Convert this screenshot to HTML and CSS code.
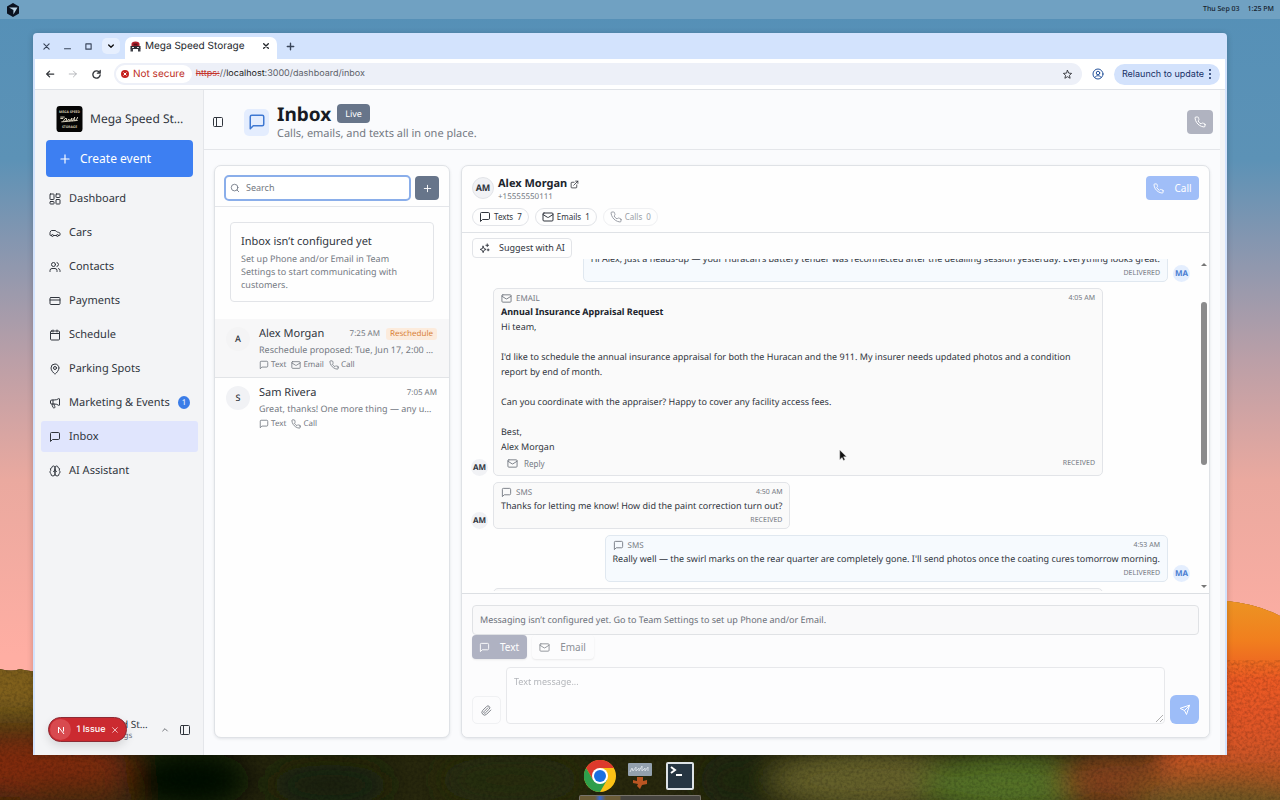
FILE: index.html
```html
<!DOCTYPE html>
<html lang="en">
<head>
<meta charset="utf-8">
<meta name="viewport" content="width=device-width, initial-scale=1">
<title>Mega Speed Storage</title>
<link rel="stylesheet" href="styles.css">
</head>
<body>
<svg class="defs" aria-hidden="true">
  <symbol id="i-message" viewBox="0 0 24 24"><path d="M21 15a2 2 0 0 1-2 2H7l-4 4V5a2 2 0 0 1 2-2h14a2 2 0 0 1 2 2z"/></symbol>
  <symbol id="i-mail" viewBox="0 0 24 24"><rect x="2" y="4" width="20" height="16" rx="2"/><path d="m22 7-9 5.7a2 2 0 0 1-2 0L2 7"/></symbol>
  <symbol id="i-phone" viewBox="0 0 24 24"><path d="M22 16.92v3a2 2 0 0 1-2.18 2 19.79 19.79 0 0 1-8.63-3.07 19.5 19.5 0 0 1-6-6 19.79 19.79 0 0 1-3.07-8.67A2 2 0 0 1 4.11 2h3a2 2 0 0 1 2 1.72 12.84 12.84 0 0 0 .7 2.81 2 2 0 0 1-.45 2.11L8.09 9.91a16 16 0 0 0 6 6l1.27-1.27a2 2 0 0 1 2.11-.45 12.84 12.84 0 0 0 2.81.7A2 2 0 0 1 22 16.92z"/></symbol>
  <symbol id="i-dash" viewBox="0 0 24 24"><rect x="2" y="2" width="8" height="11" rx="1"/><rect x="14" y="2" width="8" height="7" rx="1"/><rect x="14" y="13" width="8" height="9" rx="1"/><rect x="2" y="17" width="8" height="5" rx="1"/></symbol>
  <symbol id="i-car" viewBox="0 0 24 24"><path d="M19 17h2c.6 0 1-.4 1-1v-3c0-.9-.7-1.7-1.5-1.9C18.7 10.6 16 10 16 10s-1.3-1.4-2.2-2.3c-.5-.4-1.1-.7-1.8-.7H5c-.6 0-1.1.4-1.4.9l-1.4 2.9A3.7 3.7 0 0 0 2 12v4c0 .6.4 1 1 1h2"/><circle cx="7" cy="17" r="2"/><path d="M9 17h6"/><circle cx="17" cy="17" r="2"/></symbol>
  <symbol id="i-users" viewBox="0 0 24 24"><path d="M16 21v-2a4 4 0 0 0-4-4H6a4 4 0 0 0-4 4v2"/><circle cx="9" cy="7" r="4"/><path d="M22 21v-2a4 4 0 0 0-3-3.87M16 3.13a4 4 0 0 1 0 7.75"/></symbol>
  <symbol id="i-card" viewBox="0 0 24 24"><rect x="2" y="5" width="20" height="14" rx="2"/><path d="M2 10h20"/></symbol>
  <symbol id="i-calendar" viewBox="0 0 24 24"><path d="M8 2v4M16 2v4M3 9h18"/><rect x="3" y="4" width="18" height="18" rx="2"/></symbol>
  <symbol id="i-pin" viewBox="0 0 24 24"><path d="M20 10c0 5-5.5 10.2-7.4 11.8a1 1 0 0 1-1.2 0C9.500 20.200 4 15 4 10a8 8 0 0 1 16 0"/><circle cx="12" cy="10" r="3"/></symbol>
  <symbol id="i-mega" viewBox="0 0 24 24"><path d="M11 6a13 13 0 0 0 8.400-2.800A1 1 0 0 1 21 4v12a1 1 0 0 1-1.600.8A13 13 0 0 0 11 14H5a2 2 0 0 1-2-2V8a2 2 0 0 1 2-2z"/><path d="M6 14a12 12 0 0 0 2.400 7.200 2 2 0 0 0 3.200-2.400A8 8 0 0 1 10 14M8 6v8"/></symbol>
  <symbol id="i-brain" viewBox="0 0 24 24"><path d="M12 5a3 3 0 1 0-5.997.125 4 4 0 0 0-2.526 5.770 4 4 0 0 0 .556 6.588A4 4 0 1 0 12 18Z"/><path d="M12 5a3 3 0 1 1 5.997.125 4 4 0 0 1 2.526 5.770 4 4 0 0 1-.556 6.588A4 4 0 1 1 12 18Z"/><path d="M15 13a4.500 4.500 0 0 1-3-4 4.500 4.500 0 0 1-3 4"/></symbol>
  <symbol id="i-panel" viewBox="0 0 24 24"><rect x="3" y="3" width="18" height="18" rx="2"/><path d="M9 3v18"/></symbol>
  <symbol id="i-plus" viewBox="0 0 24 24"><path d="M5 12h14M12 5v14"/></symbol>
  <symbol id="i-search" viewBox="0 0 24 24"><circle cx="11" cy="11" r="8"/><path d="m21 21-4.300-4.300"/></symbol>
  <symbol id="i-sparkles" viewBox="0 0 24 24"><path d="m9 7 1.900 5.100L15.500 14l-4.600 1.900L9 21l-1.900-5.100L2.500 14l4.600-1.900zM18 2v6M15 5h6M20 13v4M18 15h4"/></symbol>
  <symbol id="i-external" viewBox="0 0 24 24"><path d="M15 3h6v6M10 14 21 3M18 13v6a2 2 0 0 1-2 2H5a2 2 0 0 1-2-2V8a2 2 0 0 1 2-2h6"/></symbol>
  <symbol id="i-clip" viewBox="0 0 24 24"><path d="m21.440 11.050-9.190 9.190a6 6 0 0 1-8.490-8.490l8.570-8.570A4 4 0 1 1 18 8.840l-8.590 8.570a2 2 0 0 1-2.830-2.830l8.490-8.480"/></symbol>
  <symbol id="i-send" viewBox="0 0 24 24"><path d="m21 3-6 18-4-8-8-4Z"/><path d="M21 3 11 13"/></symbol>
  <symbol id="i-up" viewBox="0 0 24 24"><path d="m5 15 7-7 7 7"/></symbol>
  <symbol id="i-down" viewBox="0 0 24 24"><path d="m5 9 7 7 7-7"/></symbol>
  <symbol id="i-x" viewBox="0 0 24 24"><path d="M5 5l14 14M19 5 5 19"/></symbol>
  <symbol id="i-min" viewBox="0 0 24 24"><path d="M4 18h16"/></symbol>
  <symbol id="i-max" viewBox="0 0 24 24"><path d="M5 5h14v14H5z"/></symbol>
  <symbol id="i-left" viewBox="0 0 24 24"><path d="M21 12H4M11 5l-7 7 7 7"/></symbol>
  <symbol id="i-right" viewBox="0 0 24 24"><path d="M3 12h17M13 5l7 7-7 7"/></symbol>
  <symbol id="i-reload" viewBox="0 0 24 24"><path d="M20 13a8 8 0 1 1-2.300-6.700L20 8.500M20 3v6h-6"/></symbol>
  <symbol id="i-star" viewBox="0 0 24 24"><path d="m12 3 2.700 6 6.300.6-4.800 4.200 1.500 6.400-5.700-3.400-5.700 3.400 1.500-6.400L3 9.600 9.300 9z"/></symbol>
  <symbol id="i-user" viewBox="0 0 24 24"><circle cx="12" cy="12" r="10"/><circle cx="12" cy="10" r="3.500"/><path d="M5.500 19c2-3 4-3.500 6.500-3.500s4.500.5 6.500 3.500"/></symbol>
</svg>

<svg class="wallpaper" viewBox="0 0 1280 800" preserveAspectRatio="none" aria-hidden="true">
  <defs>
    <linearGradient id="sky" x1="0" y1="0" x2="0" y2="1">
      <stop offset="0" stop-color="#5590b7"/><stop offset=".2" stop-color="#5c92b6"/><stop offset=".3" stop-color="#8496b0"/>
      <stop offset=".45" stop-color="#bb9fa7"/><stop offset=".6" stop-color="#eaa99f"/><stop offset=".82" stop-color="#ffaea3"/>
    </linearGradient>
    <linearGradient id="dune" x1="0" y1="600" x2="0" y2="800" gradientUnits="userSpaceOnUse">
      <stop offset="0" stop-color="#ec9423"/><stop offset=".2" stop-color="#f17f1e"/><stop offset=".4" stop-color="#ec5a24"/>
      <stop offset=".7" stop-color="#dc5427"/><stop offset="1" stop-color="#9c5420"/>
    </linearGradient>
    <filter id="soft" x="-50%" y="-50%" width="200%" height="200%"><feGaussianBlur stdDeviation="14"/></filter>
    <filter id="grain" x="0" y="0" width="100%" height="100%"><feTurbulence type="fractalNoise" baseFrequency=".35" numOctaves="2"/><feColorMatrix values="0 0 0 0 0  0 0 0 0 0  0 0 0 0 0  0 1.600 0 0 -.6"/></filter>
    <clipPath id="ground"><path d="M0 669q12 3 20 0 8 2 20 3V755H1227V601q30 3 53 15V800H0z"/></clipPath>
  </defs>
  <rect width="1280" height="800" fill="url(#sky)"/>
  <g clip-path="url(#ground)">
    <rect y="590" width="1280" height="210" fill="#28280d"/>
    <g filter="url(#soft)">
      <rect x="-40" y="650" width="100" height="70" fill="#80601e"/>
      <ellipse cx="20" cy="765" rx="110" ry="32" fill="#812b10"/>
      <ellipse cx="80" cy="800" rx="60" ry="18" fill="#4b2a0d"/>
      <ellipse cx="190" cy="780" rx="60" ry="30" fill="#050805"/>
      <ellipse cx="330" cy="785" rx="60" ry="20" fill="#152010"/>
      <ellipse cx="510" cy="780" rx="70" ry="24" fill="#252d10"/>
      <ellipse cx="740" cy="780" rx="40" ry="28" fill="#1a2611"/>
      <ellipse cx="870" cy="780" rx="100" ry="30" fill="#66622a"/>
      <ellipse cx="1010" cy="785" rx="90" ry="30" fill="#557228"/>
      <ellipse cx="1120" cy="780" rx="60" ry="28" fill="#85431a"/>
      <rect x="1160" y="560" width="180" height="230" fill="url(#dune)"/>
      <ellipse cx="1220" cy="805" rx="90" ry="26" fill="#6b5720"/>
    </g>
    <rect x="1226" y="590" width="60" height="110" fill="url(#dune)"/>
    <rect y="660" width="1280" height="140" filter="url(#grain)" opacity=".25"/>
  </g>
</svg>

<header class="menubar">
  <svg class="cube" viewBox="0 0 14 14"><path d="M7 0l6 3.500v7L7 14 1 10.500v-7z" fill="#0b1220"/><path d="M3 4.500h8.500L7.400 11.500V7z" fill="#b9d3e4"/></svg>
  <div class="clock"><span>Thu Sep 03</span><span>1:25 PM</span></div>
</header>

<div class="window">
  <div class="tabstrip">
    <button class="wbtn" aria-label="Close window"><svg class="ic s9 bold"><use href="#i-x"/></svg></button>
    <button class="wbtn" aria-label="Minimize"><svg class="ic s9 bold"><use href="#i-min"/></svg></button>
    <button class="wbtn" aria-label="Maximize"><svg class="ic s9 bold"><use href="#i-max"/></svg></button>
    <button class="wbtn chip" aria-label="Search tabs"><svg class="ic s8 heavy"><use href="#i-down"/></svg></button>
    <div class="tab">
      <svg class="s11" viewBox="0 0 22 22"><path d="M3 10V6q0-5 8-5t8 5v4z" fill="#b3202c"/><path d="M1 10h20v6H1z" fill="#2b2d33"/><path d="M1 15h5v6H1zM16 15h5v6h-5z" fill="#3d3f46"/><path d="M7 5h8v4H7z" fill="#5a1118"/><path d="M4 12h4v2H4zM14 12h4v2h-4z" fill="#e4e4e4"/></svg>
      <span class="tab-title">Mega Speed Storage</span>
      <button class="wbtn" aria-label="Close tab"><svg class="ic s8 heavy"><use href="#i-x"/></svg></button>
    </div>
    <button class="wbtn newtab" aria-label="New tab"><svg class="ic s11 bold"><use href="#i-plus"/></svg></button>
  </div>
  <div class="toolbar">
    <button class="wbtn" aria-label="Back"><svg class="ic s10 bold"><use href="#i-left"/></svg></button>
    <button class="wbtn dim" aria-label="Forward"><svg class="ic s10"><use href="#i-right"/></svg></button>
    <button class="wbtn" aria-label="Reload"><svg class="ic s11 bold"><use href="#i-reload"/></svg></button>
    <div class="urlbar">
      <span class="insecure"><svg class="s8" viewBox="0 0 16 16"><circle cx="8" cy="8" r="8" fill="#c5221f"/><path d="M5 5l6 6M11 5l-6 6" stroke="#fff" stroke-width="2"/></svg>Not secure</span>
      <span class="url"><s>https:</s>//<b>localhost</b>:3000/dashboard/inbox</span>
      <svg class="ic s11 star"><use href="#i-star"/></svg>
    </div>
    <button class="wbtn profile" aria-label="Profile"><svg class="ic s12"><use href="#i-user"/></svg></button>
    <button class="relaunch">Relaunch to update <svg class="s12" viewBox="0 0 24 24" fill="#173066"><circle cx="12" cy="4" r="2"/><circle cx="12" cy="12" r="2"/><circle cx="12" cy="20" r="2"/></svg></button>
  </div>

  <div class="app">
    <aside class="sidebar">
      <div class="brand">
        <svg class="logo" viewBox="0 0 54 54" aria-hidden="true"><rect width="54" height="54" rx="7" fill="#050505"/><text x="27" y="15" text-anchor="middle" class="logo-text">MEGA SPEED</text><path d="M8 23h9M8 26h6M14 32q4-9 7-6 1 4-3 6 6-1 8-5-1 5 2 4l4-6q-2 7 1 6l5-8q-3 9 1 7 4-2 5-7M10 33l34-3" fill="none" stroke="#e0d9c4" stroke-width="2"/><text x="27" y="45" text-anchor="middle" class="logo-text">STORAGE</text></svg>
        <span class="ellipsis">Mega Speed Storage</span>
      </div>
      <button class="create"><svg class="ic s14"><use href="#i-plus"/></svg>Create event</button>
      <nav class="nav">
        <a href="#"><svg class="ic s12"><use href="#i-dash"/></svg>Dashboard</a>
        <a href="#"><svg class="ic s12"><use href="#i-car"/></svg>Cars</a>
        <a href="#"><svg class="ic s12"><use href="#i-users"/></svg>Contacts</a>
        <a href="#"><svg class="ic s12"><use href="#i-card"/></svg>Payments</a>
        <a href="#"><svg class="ic s12"><use href="#i-calendar"/></svg>Schedule</a>
        <a href="#"><svg class="ic s12"><use href="#i-pin"/></svg>Parking Spots</a>
        <a href="#"><svg class="ic s12"><use href="#i-mega"/></svg>Marketing &amp; Events<span class="count">1</span></a>
        <a href="#" class="active" aria-current="page"><svg class="ic s12"><use href="#i-message"/></svg>Inbox</a>
        <a href="#"><svg class="ic s12"><use href="#i-brain"/></svg>AI Assistant</a>
      </nav>
      <div class="account">
        <div class="account-text"><span class="ellipsis">Mega Speed Storage</span><small>Account settings</small></div>
        <svg class="ic s8"><use href="#i-up"/></svg>
        <button class="plain" aria-label="Collapse sidebar"><svg class="ic s12"><use href="#i-panel"/></svg></button>
        <div class="issue"><span class="issue-n"><svg class="s10" viewBox="0 0 20 20" fill="none" stroke="#fff" stroke-width="2"><path d="M5 16V4l11 14M15 4v9"/></svg></span>1 Issue<svg class="ic s8"><use href="#i-x"/></svg></div>
      </div>
    </aside>

    <main class="main">
      <header class="page-head">
        <button class="plain" aria-label="Toggle sidebar"><svg class="ic s12"><use href="#i-panel"/></svg></button>
        <span class="head-icon"><svg class="ic s18"><use href="#i-message"/></svg></span>
        <div class="head-text">
          <div class="head-row"><h1>Inbox</h1><span class="live">Live</span></div>
          <p>Calls, emails, and texts all in one place.</p>
        </div>
        <button class="phone-btn" disabled aria-label="Phone"><svg class="ic s12"><use href="#i-phone"/></svg></button>
      </header>

      <div class="columns">
        <section class="card threads">
          <div class="search-row">
            <label class="search"><svg class="ic s10"><use href="#i-search"/></svg><input type="text" placeholder="Search" aria-label="Search"></label>
            <button class="add" aria-label="New conversation"><svg class="ic s11"><use href="#i-plus"/></svg></button>
          </div>
          <div class="notice">
            <h2>Inbox isn’t configured yet</h2>
            <p>Set up Phone and/or Email in Team Settings to start communicating with customers.</p>
          </div>
          <article class="thread selected">
            <span class="avatar big">A</span>
            <div class="thread-body">
              <div class="thread-top"><h3>Alex Morgan</h3><time>7:25 AM</time><span class="tag">Reschedule</span></div>
              <p class="ellipsis">Reschedule proposed: Tue, Jun 17, 2:00 PM</p>
              <div class="kinds"><span><svg class="ic s10"><use href="#i-message"/></svg>Text</span><span><svg class="ic s10"><use href="#i-mail"/></svg>Email</span><span><svg class="ic s10"><use href="#i-phone"/></svg>Call</span></div>
            </div>
          </article>
          <article class="thread">
            <span class="avatar big">S</span>
            <div class="thread-body">
              <div class="thread-top"><h3>Sam Rivera</h3><time>7:05 AM</time></div>
              <p class="ellipsis">Great, thanks! One more thing — any update?</p>
              <div class="kinds"><span><svg class="ic s10"><use href="#i-message"/></svg>Text</span><span><svg class="ic s10"><use href="#i-phone"/></svg>Call</span></div>
            </div>
          </article>
        </section>

        <section class="card chat">
          <div class="chat-head">
            <div class="person">
              <span class="avatar mid">AM</span>
              <div class="person-text"><h2>Alex Morgan <a href="#" aria-label="Open contact"><svg class="ic s9"><use href="#i-external"/></svg></a></h2><p>+15555550111</p></div>
              <button class="call" disabled><svg class="ic s11"><use href="#i-phone"/></svg>Call</button>
            </div>
            <div class="pills">
              <button class="pill"><svg class="ic s12"><use href="#i-message"/></svg>Texts<span>7</span></button>
              <button class="pill"><svg class="ic s12"><use href="#i-mail"/></svg>Emails<span>1</span></button>
              <button class="pill" disabled><svg class="ic s12"><use href="#i-phone"/></svg>Calls<span>0</span></button>
            </div>
          </div>
          <div class="assist"><button class="suggest"><svg class="ic s11"><use href="#i-sparkles"/></svg>Suggest with AI</button></div>
          <div class="scroller">
            <div class="messages">
              <div class="msg sent first">
                <div class="bubble">
                  <div class="meta"><svg class="ic s11"><use href="#i-message"/></svg>SMS</div>
                  <p>Hi Alex, just a heads-up — your Huracan's battery tender was reconnected after the detailing session yesterday. Everything looks great.</p>
                  <div class="state">DELIVERED</div>
                </div>
                <span class="avatar small blue">MA</span>
              </div>
              <div class="msg">
                <span class="avatar small">AM</span>
                <div class="bubble">
                  <div class="meta"><svg class="ic s11"><use href="#i-mail"/></svg>EMAIL<time>4:05 AM</time></div>
                  <h3>Annual Insurance Appraisal Request</h3>
                  <p class="letter">Hi team,

I'd like to schedule the annual insurance appraisal for both the Huracan and the 911. My insurer needs updated photos and a condition report by end of month.

Can you coordinate with the appraiser? Happy to cover any facility access fees.

Best,
Alex Morgan</p>
                  <div class="state tall"><button class="reply"><svg class="ic s11"><use href="#i-mail"/></svg>Reply</button>RECEIVED</div>
                </div>
              </div>
              <div class="msg">
                <span class="avatar small">AM</span>
                <div class="bubble">
                  <div class="meta"><svg class="ic s11"><use href="#i-message"/></svg>SMS<time>4:50 AM</time></div>
                  <p>Thanks for letting me know! How did the paint correction turn out?</p>
                  <div class="state">RECEIVED</div>
                </div>
              </div>
              <div class="msg sent">
                <div class="bubble">
                  <div class="meta"><svg class="ic s11"><use href="#i-message"/></svg>SMS<time>4:53 AM</time></div>
                  <p>Really well — the swirl marks on the rear quarter are completely gone. I'll send photos once the coating cures tomorrow morning.</p>
                  <div class="state">DELIVERED</div>
                </div>
                <span class="avatar small blue">MA</span>
              </div>
              <div class="msg next"><div class="bubble"></div></div>
            </div>
            <div class="bar" aria-hidden="true"><i class="arrow-up"></i><i class="thumb"></i><i class="arrow-down"></i></div>
          </div>
          <div class="composer">
            <p class="warn">Messaging isn’t configured yet. Go to Team Settings to set up Phone and/or Email.</p>
            <div class="modes">
              <button class="mode on" disabled><svg class="ic s11"><use href="#i-message"/></svg>Text</button>
              <button class="mode" disabled><svg class="ic s11"><use href="#i-mail"/></svg>Email</button>
            </div>
            <div class="write">
              <button class="attach" disabled aria-label="Attach file"><svg class="ic s11"><use href="#i-clip"/></svg></button>
              <textarea placeholder="Text message..." aria-label="Text message" disabled></textarea>
              <button class="send" disabled aria-label="Send"><svg class="ic s12"><use href="#i-send"/></svg></button>
            </div>
          </div>
        </section>
      </div>
    </main>
  </div>
</div>

<footer class="dock">
  <svg class="s32" viewBox="0 0 32 32"><circle cx="16" cy="16" r="16" fill="#fbc116"/><path d="M2.100 8A16 16 0 0 1 29.900 8H16L9.100 20z" fill="#dd3a2c"/><path d="M2.100 8A16 16 0 0 0 16 32l7-12H9.100z" fill="#2f9e4b"/><circle cx="16" cy="16" r="8" fill="#fff"/><circle cx="16" cy="16" r="6" fill="#1b6fe0"/></svg>
  <svg class="s32" viewBox="0 0 32 32"><rect x="4" y="3" width="24" height="13" rx="1" fill="#93a0ad"/><path d="M6 12l2-4 1 3 3-4v4l3-3v3l3-5v5l3-3v3l3-4v4" fill="none" stroke="#d4dbe2"/><path d="M13 17h6v4l4-1v4l-5 1-2 4-3-3 1-2-5-1v-3l4 1z" fill="#ba5522"/></svg>
  <svg class="s32" viewBox="0 0 32 32"><rect x="2" y="2" width="28" height="28" rx="2" fill="#dde2e6"/><rect x="4" y="4" width="24" height="24" fill="#263542"/><path d="M7 7l4 3-4 3M12 15h6" fill="none" stroke="#fff" stroke-width="2"/></svg>
  <div class="tray"></div>
</footer>

<svg class="pointer" viewBox="0 0 12 18" aria-hidden="true"><path d="M1 1v13l3-3 2 4 2-1-2-4h4z" fill="#111" stroke="#ddd" stroke-width=".6"/></svg>
</body>
</html>
```
FILE: styles.css
```css
* { box-sizing: border-box; }
html, body { height: 100%; }
body { margin: 0; overflow: hidden; position: relative; font: 9px/14px "Noto Sans", sans-serif; text-rendering: geometricPrecision; color: #30353d; background: #5590b7; }
h1, h2, h3, p { margin: 0; font-weight: 400; }
button { margin: 0; padding: 0; border: 0; background: none; font: inherit; color: inherit; display: inline-flex; align-items: center; justify-content: center; }
a { color: inherit; text-decoration: none; }
svg { flex: none; display: block; }
.defs { position: absolute; width: 0; height: 0; }
.ic { fill: none; stroke: currentColor; stroke-width: 2; stroke-linecap: round; stroke-linejoin: round; }
.bold { stroke-width: 3; }
.heavy { stroke-width: 4; }
.s8 { width: 8px; height: 8px; }
.s9 { width: 9px; height: 9px; }
.s10 { width: 10px; height: 10px; }
.s11 { width: 11px; height: 11px; }
.s12 { width: 12px; height: 12px; }
.s14 { width: 14px; height: 14px; }
.s18 { width: 18px; height: 18px; }
.s32 { width: 32px; height: 32px; }
.ellipsis { overflow: hidden; text-overflow: ellipsis; white-space: nowrap; min-width: 0; }

/* Desktop */
.wallpaper { position: absolute; inset: 0; width: 100%; height: 100%; }
.menubar { position: absolute; inset: 0 0 auto; height: 19px; padding: 0 6px; display: flex; align-items: center; justify-content: space-between; background: #70a1c2; color: #14202b; }
.cube { width: 14px; height: 14px; }
.clock { display: flex; gap: 8px; font-size: 7px; font-weight: 500; }
.window { position: absolute; inset: 33px 53px 45px 33px; display: flex; flex-direction: column; background: #d3e3fd; border-radius: 4px 4px 0 0; box-shadow: 0 1px 6px rgba(0, 0, 0, .2); overflow: hidden; }
.dock { position: absolute; inset: auto 0 0; height: 40px; display: flex; justify-content: center; gap: 8px; }
.tray { position: absolute; bottom: 0; width: 122px; height: 5px; border: 1px solid #77736a; border-bottom: 0; border-radius: 2px 2px 0 0; background: linear-gradient(90deg, #6b5c37 15px, #3b6bd0 20px, #6b5c37 26px, #6b5c37 40px, #46443f 41px); }
.pointer { position: absolute; left: 839px; top: 449px; width: 9px; height: 14px; }

/* Browser frame */
.tabstrip { height: 26px; display: flex; align-items: center; padding: 0 6px; gap: 7px; font-family: Inter, sans-serif; color: #39455a; }
.wbtn { width: 14px; height: 16px; }
.chip { width: 18px; background: #e6effe; border-radius: 5px; color: #111; }
.tab { align-self: flex-end; height: 22px; width: 152px; margin-left: -2px; padding: 0 4px 4px 5px; display: flex; align-items: center; gap: 4px; background: #fff; border-radius: 7px 7px 0 0; color: #22252a; }
.tab-title { flex: 1; font-size: 10px; white-space: nowrap; }
.newtab { margin-left: -1px; }
.toolbar { margin: 0 2px; height: 31px; display: flex; align-items: center; padding: 0 5px 0 8px; gap: 9px; background: #fff; border-bottom: 1px solid #dfe2e7; font-family: Inter, sans-serif; color: #33363b; }
.dim { color: #a8abb0; }
.urlbar { flex: 1; height: 22px; margin-left: 2px; padding: 0 9px 0 2px; display: flex; align-items: center; gap: 4px; border-radius: 11px; background: #edf0f8; }
.insecure { height: 18px; padding: 0 7px 0 5px; display: flex; align-items: center; gap: 4px; border-radius: 9px; background: #fff; color: #bd2c24; font-size: 10px; }
.url { flex: 1; color: #5c6068; }
.url s { color: #c5342d; }
.url b { font-weight: 400; color: #222; }
.profile { color: #26539b; }
.relaunch { height: 21px; padding: 0 4px 0 8px; border-radius: 11px; background: #d3e2fc; color: #173066; }

/* App shell */
.app { flex: 1; min-height: 0; margin: 0 2px; display: flex; background: #f3f4f6; }
.sidebar { width: 169px; flex: none; padding: 16px 5px 8px 6px; display: flex; flex-direction: column; border-right: 1px solid #e4e6ea; }
.brand { display: flex; align-items: center; gap: 7px; height: 26px; padding: 0 10px 0 15px; font-size: 12px; }
.logo { width: 27px; height: 26px; }
.logo-text { font: 700 7px "Noto Sans", sans-serif; fill: #cfc6ad; }
.create { height: 37px; margin: 8px 5px 0; padding-left: 12px; justify-content: flex-start; gap: 8px; border-radius: 4px; background: #3d7ff2; color: #fff; font-size: 12px; }
.nav { margin-top: 6px; display: flex; flex-direction: column; gap: 3px; }
.nav a { height: 31px; padding: 0 8px; display: flex; align-items: center; gap: 8px; border-radius: 3px; font-size: 11px; white-space: nowrap; }
.nav .active { background: #e0e5fd; }
.count { width: 13px; height: 13px; margin-left: auto; border-radius: 50%; background: #3b7de8; color: #fff; font-size: 8px; line-height: 13px; text-align: center; }
.account { position: relative; margin-top: auto; height: 34px; padding: 0 7px 0 29px; display: flex; align-items: center; gap: 10px; font-size: 10px; }
.account-text { flex: 1; min-width: 0; display: flex; flex-direction: column; line-height: 12px; }
.account-text small { font-size: 8px; color: #6b7280; }
.issue { position: absolute; left: 7px; top: 4px; width: 79px; height: 25px; padding: 0 7px 0 1px; display: flex; align-items: center; justify-content: space-between; border: 1px solid #8c2b35; border-radius: 13px; background: #cb2a30; color: #fff; font: 500 9px Inter, sans-serif; box-shadow: 0 4px 10px rgba(0, 0, 0, .12); }
.issue-n { width: 21px; height: 21px; display: grid; place-items: center; border-radius: 50%; background: #d84a4f; }
.main { flex: 1; min-width: 0; margin-right: 5px; padding-top: 5px; display: flex; flex-direction: column; background: #fafbfd; }
.page-head { height: 55px; padding: 0 7px 0 8px; display: flex; align-items: center; border-bottom: 1px solid #e4e6ea; }
.head-icon { width: 25px; height: 27px; margin: 0 8px 0 20px; display: grid; place-items: center; border-radius: 5px; background: #e4edfe; color: #3f78d2; }
.head-text { flex: 1; padding-top: 1px; }
.head-row { display: flex; align-items: center; gap: 6px; }
.head-row h1 { font-size: 19px; line-height: 22px; font-weight: 700; color: #171b24; }
.live { padding: 0 8px; border-radius: 4px; background: #67758a; color: #fff; line-height: 19px; }
.head-text p { font-size: 11px; line-height: 18px; color: #747982; }
.phone-btn { width: 26px; height: 24px; border-radius: 4px; background: #b0b3c0; color: #fff; }
.columns { flex: 1; min-height: 0; padding: 15px 10px 17px 10px; display: flex; gap: 11px; }
.card { border: 1px solid #dfe2e6; border-radius: 7px; background: #fefefe; box-shadow: 0 1px 3px rgba(20, 30, 50, .1); overflow: hidden; display: flex; flex-direction: column; }

/* Conversation list */
.threads { flex: 0 0 236px; }
.search-row { height: 41px; flex: none; padding: 4px 10px 0 9px; display: flex; align-items: center; gap: 4px; border-bottom: 1px solid #e4e6ea; }
.search { flex: 1; height: 26px; padding: 0 4px; display: flex; align-items: center; gap: 6px; border: 2px solid #8aaeea; border-radius: 5px; background: #fff; color: #6b7280; }
.search input { flex: 1; min-width: 0; padding: 0; border: 0; outline: 0; background: none; font: inherit; }
.search input::placeholder { color: #737881; }
.add { width: 24px; height: 24px; border-radius: 4px; background: #67758a; color: #fff; }
.notice { margin: 15px 15px 17px; padding: 10px 10px 9px; border: 1px solid #e2e4e8; border-radius: 4px; }
.notice h2 { font-size: 11px; line-height: 18px; }
.notice p { line-height: 13px; padding: 1px 0; color: #747982; }
.thread { height: 59px; padding: 8px 12px 0 11px; display: flex; gap: 9px; border-bottom: 1px solid transparent; }
.selected { background: #f7f7f8; border-color: #e2e4e7; }
.thread-body { flex: 1; min-width: 0; }
.thread-top { display: flex; align-items: center; gap: 6px; height: 14px; }
.thread-top h3 { flex: 1; font-size: 11px; white-space: nowrap; }
.thread time { font-size: 8px; color: #747982; }
.tag { padding: 0 4px; border-radius: 3px; background: #fcebdc; color: #d88239; font-size: 8px; line-height: 12px; }
.thread p { line-height: 18px; color: #747982; }
.kinds { display: flex; gap: 5px; font-size: 8px; line-height: 12px; color: #747982; }
.kinds span { display: flex; align-items: center; gap: 2px; }
.avatar { flex: none; display: grid; place-items: center; border-radius: 50%; background: #f1f2f5; color: #30353d; }
.big { width: 24px; height: 24px; font-weight: 500; }
.mid { width: 22px; height: 22px; border: 1px solid #e2e4e8; font-weight: 700; }
.small { width: 17px; height: 17px; font-size: 8px; font-weight: 700; }
.blue { background: #e4eefe; color: #4b7fd2; }
.selected .big { background: #f4f4f5; }

/* Conversation */
.chat { flex: 1; min-width: 0; }
.chat-head { height: 67px; flex: none; padding: 9px 10px 0; border-bottom: 1px solid #dfe2e6; }
.person { display: flex; align-items: center; gap: 4px; height: 26px; }
.person-text { flex: 1; padding-top: 4px; }
.person h2 { display: flex; align-items: center; gap: 3px; font-size: 11px; line-height: 14px; font-weight: 700; color: #20242c; }
.person p { font-size: 8px; line-height: 12px; color: #747982; }
.call { height: 24px; width: 53px; gap: 10px; border-radius: 4px; background: #a0bef8; color: #fff; font-size: 10px; }
.pills { display: flex; gap: 6px; margin-top: 7px; }
.pill { height: 18px; padding: 0 6px; gap: 3px; border: 1px solid #e2e4e8; border-radius: 9px; font-size: 8px; }
.pill span { margin-left: 1px; }
.pill:disabled { color: #9a9ea6; border-color: #eff0f2; }
.assist { flex: none; height: 26px; padding: 5px 10px 0; }
.suggest { height: 20px; padding: 0 6px; gap: 9px; border: 1px solid #e2e4e8; border-radius: 4px; }
.scroller { flex: 1; min-height: 0; display: flex; margin-bottom: 2px; overflow: hidden; }
.messages { flex: 1; min-width: 0; padding: 0 10px 0 9px; display: flex; flex-direction: column; gap: 6px; }
.msg { flex: none; display: flex; align-items: flex-end; gap: 5px; }
.sent { justify-content: flex-end; }
.first { margin-top: -24px; }
.bubble { max-width: 610px; padding: 4px 7px 2px; border: 1px solid #e2e4e8; border-radius: 5px; background: #fafafa; }
.sent .bubble { background: #f6fafe; border-color: #e0e8f0; }
.meta { display: flex; align-items: center; gap: 4px; font-size: 8px; line-height: 11px; color: #747982; }
.meta time { margin-left: auto; font-size: 7px; }
.bubble p, .bubble h3 { line-height: 15px; }
.bubble h3 { font-size: 9px; font-weight: 700; color: #20242c; }
.bubble .letter { padding-right: 14px; white-space: pre-line; }
.state { margin-top: 2px; display: flex; justify-content: flex-end; align-items: center; font-size: 7px; line-height: 11px; color: #747982; }
.tall { height: 15px; margin-bottom: 2px; }
.reply { margin: 0 auto 0 6px; gap: 6px; font-size: 8px; }
.next { padding-left: 22px; }
.next .bubble { width: 610px; height: 40px; }
.bar { width: 10px; display: flex; flex-direction: column; align-items: center; padding: 4px 1px 3px 0; }
.messages { padding-right: 9px; }
.arrow-up, .arrow-down { border: 3px solid transparent; }
.arrow-up { border-top: 0; border-bottom-color: #777; }
.arrow-down { margin-top: auto; border-bottom: 0; border-top-color: #777; }
.thumb { margin-top: 36px; width: 6px; height: 50%; border-radius: 3px; background: #8b8b8c; }
.composer { flex: none; padding: 11px 10px 13px; border-top: 1px solid #dcdfe3; background: #fcfcfd; }
.warn { padding: 0 7px; border: 1px solid #e0e2e5; border-radius: 4px; background: #f9f9fa; line-height: 28px; color: #6b7079; }
.modes { display: flex; gap: 5px; font-size: 10px; }
.mode { height: 24px; padding: 0 8px 0 7px; gap: 10px; border-radius: 4px; color: #8c9097; box-shadow: 0 1px 2px rgba(0, 0, 0, .08); }
.on { background: #afb2c2; color: #fff; }
.write { margin-top: 8px; display: flex; align-items: flex-end; gap: 5px; }
.write textarea { flex: 1; min-width: 0; height: 57px; padding: 6px 7px; border: 1px solid #d3d6db; border-radius: 4px; background: #fff; font: inherit; line-height: 15px; resize: vertical; opacity: .5; }
.write textarea::placeholder { color: #6b7079; }
.attach { width: 29px; height: 28px; border: 1px solid #f0f1f3; border-radius: 5px; color: #777b82; }
.send { width: 29px; height: 29px; border-radius: 6px; background: #9dbdf8; color: #fff; }
```
